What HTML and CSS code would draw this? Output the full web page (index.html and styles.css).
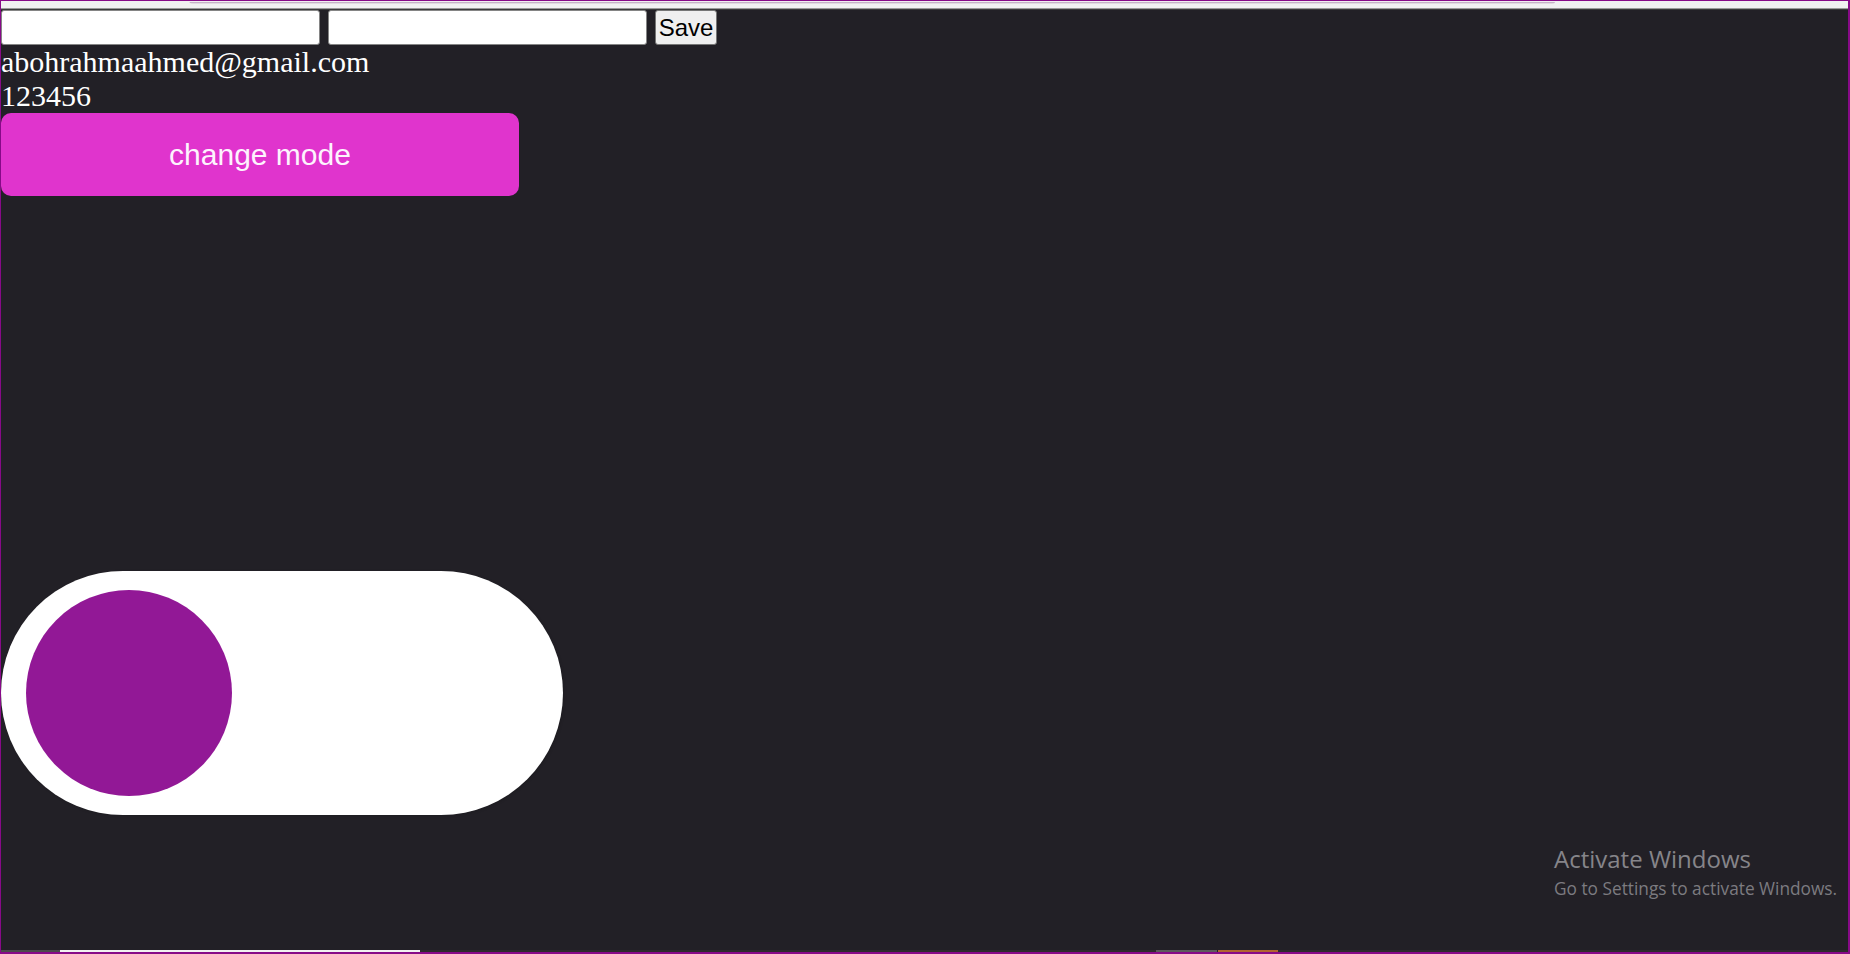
FILE: index.html
```html
<!DOCTYPE html>
<html>
<head>
<meta charset="utf-8">
<title>Mode</title>
<link rel="stylesheet" href="styles.css">
</head>
<body>
<div class="frame">
  <div class="topbar"><div class="tabline"></div></div>
  <main class="page">
    <div class="form-row">
      <input class="field" type="text">
      <input class="field" type="text">
      <button class="save">Save</button>
    </div>
    <div class="line">abohrahmaahmed@gmail.com</div>
    <div class="line">123456</div>
    <button class="mode-btn">change mode</button>
    <div class="toggle"><div class="knob"></div></div>
  </main>
  <div class="strip">
    <span class="seg seg-a"></span>
    <span class="seg seg-b"></span>
    <span class="seg seg-c"></span>
    <span class="seg seg-d"></span>
    <span class="seg seg-e"></span>
    <span class="seg seg-f"></span>
  </div>
  <div class="watermark">
    <div class="wm-title">Activate Windows</div>
    <div class="wm-sub">Go to Settings to activate Windows.</div>
  </div>
</div>
</body>
</html>
```
FILE: styles.css
```css
html, body {
  margin: 0;
  padding: 0;
  background: #222026;
}

.frame {
  position: relative;
  width: 1850px;
  height: 954px;
  box-sizing: border-box;
  border-style: solid;
  border-color: #870a88;
  border-width: 1px 2px 2px 1px;
  background: #222026;
  display: flex;
  flex-direction: column;
  overflow: hidden;
}

.topbar {
  position: relative;
  height: 9px;
  flex: 0 0 9px;
  background: linear-gradient(to bottom, #f1f1f1 0 7px, #9a9a9a 7px 8px, #3b3b3b 8px 9px);
}

.tabline {
  position: absolute;
  top: -1px;
  left: 188px;
  width: 1366px;
  height: 4px;
  background: linear-gradient(to bottom, #f4f4f4 0 1px, #f1f1f1 1px 2px, #c6b2c6 2px 3px, #e2dae2 3px 4px);
  border-radius: 0 0 4px 6px;
}

.page {
  flex: 1;
  display: flex;
  flex-direction: column;
  align-items: flex-start;
  font-family: "Liberation Serif", "Times New Roman", serif;
  color: #ffffff;
}

.form-row {
  display: flex;
  gap: 8px;
  height: 35px;
}

.field {
  width: 319px;
  height: 35px;
  box-sizing: border-box;
  margin: 0;
  border: 1px solid #858585;
  border-radius: 3px;
  background: #ffffff;
  padding: 0 4px;
}

.save {
  height: 35px;
  width: 62px;
  box-sizing: border-box;
  margin: 0;
  padding: 0;
  border: 1px solid #767676;
  border-radius: 3px;
  background: #efefef;
  color: #000;
  font-family: "Liberation Sans", Arial, sans-serif;
  font-size: 24px;
}

.line {
  font-size: 30px;
  line-height: 34px;
  white-space: nowrap;
}

.mode-btn {
  width: 518px;
  height: 83px;
  margin: 0;
  border: none;
  border-radius: 10px;
  background: #e034cd;
  color: #fdf3fd;
  font-family: "Liberation Sans", Arial, sans-serif;
  font-size: 30px;
  padding: 0;
}

.toggle {
  margin-top: 375px;
  width: 562px;
  height: 244px;
  border-radius: 122px;
  background: #ffffff;
  box-sizing: border-box;
  padding: 19px 25px;
  box-shadow: 1px 1px 3px rgba(0, 0, 0, 0.15);
}

.knob {
  width: 206px;
  height: 206px;
  border-radius: 50%;
  background: #921896;
}

.strip {
  height: 2px;
  flex: 0 0 2px;
  display: flex;
}

.seg { display: block; height: 2px; }
.seg-a { width: 59px; background: #4b4b4b; }
.seg-b { width: 360px; background: #f0f0f0; }
.seg-c { width: 736px; background: #2c2c2c; }
.seg-d { width: 61px; background: #5b5b5b; }
.seg-e { width: 60px; background: #b0642f; margin-left: 1px; }
.seg-f { flex: 1; background: #2c2c2c; }

.watermark {
  position: absolute;
  left: 1553px;
  top: 842px;
  font-family: "Open Sans", "Noto Sans", sans-serif;
  color: #86858a;
  white-space: nowrap;
}

.wm-title {
  font-size: 24px;
  line-height: 32px;
}

.wm-sub {
  font-size: 17.3px;
  line-height: 28px;
  color: #7c7b80;
}
```
